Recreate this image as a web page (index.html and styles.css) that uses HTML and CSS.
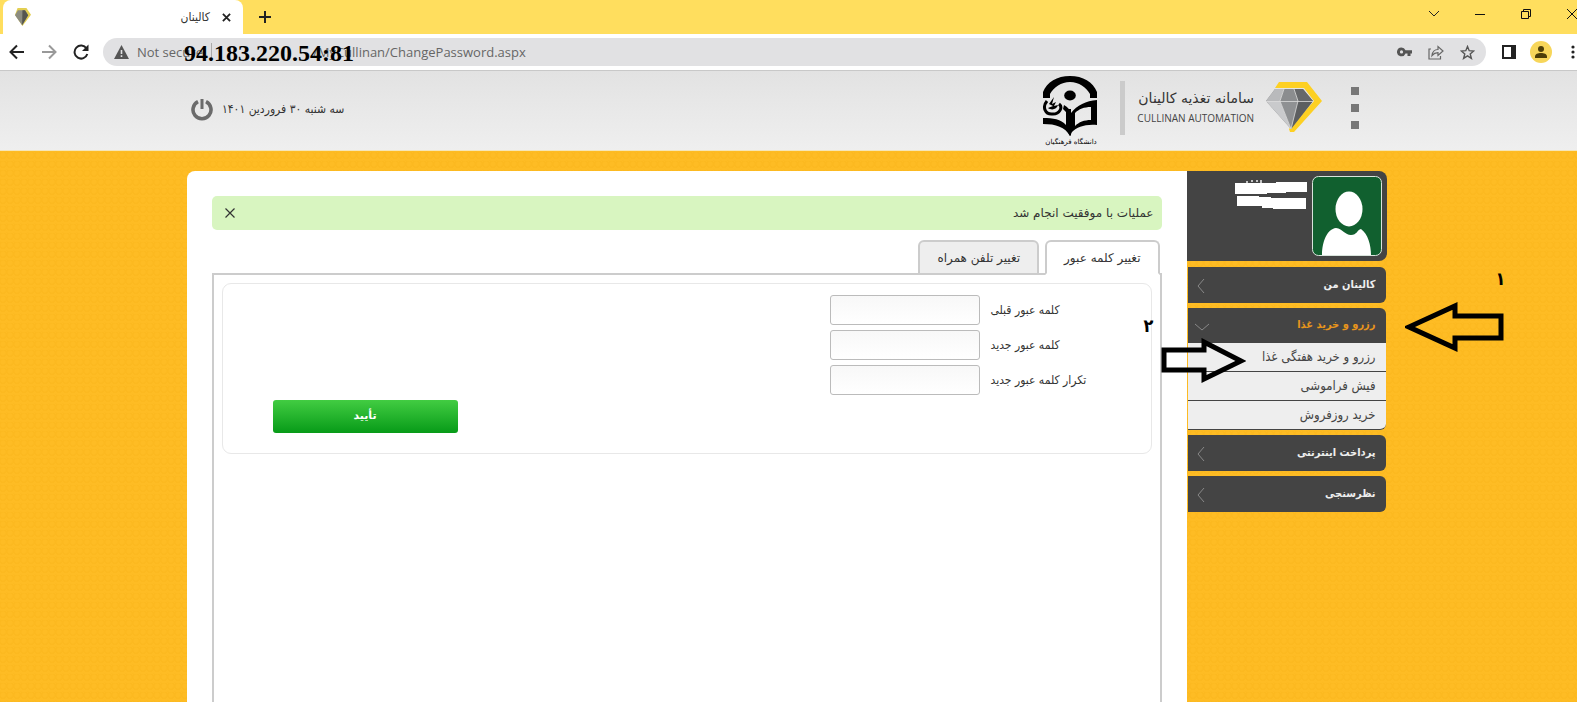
FILE: index.html
```html
<!DOCTYPE html>
<html lang="fa">
<head>
    <meta charset="UTF-8">
    <title>کالینان</title>
    <link rel="stylesheet" href="styles.css">
</head>
<body>
    <div class="tab-strip">
        <div class="browser-tab">
            <svg class="favicon" width="16" height="18" viewBox="0 0 56 50" preserveAspectRatio="none">
                <path d="M9 0h31l16 19-30 31L0 19z" fill="#e3cf52"/>
                <path d="M10 6h25l11 14-21 28L0 20z" fill="#8c8c80"/>
                <path d="M26 6h9l11 14-21 28z" fill="#55554f"/>
            </svg>
            <span class="browser-tab-title" dir="rtl">کالینان</span>
            <button class="icon-btn" aria-label="Close tab"><svg width="9" height="9" viewBox="0 0 10 10"><path d="M1 1l8 8M9 1L1 9" stroke="#222" stroke-width="2"/></svg></button>
        </div>
        <button class="icon-btn new-tab" aria-label="New tab"><svg width="12" height="12" viewBox="0 0 12 12"><path d="M6 0v12M0 6h12" stroke="#222" stroke-width="2"/></svg></button>
        <div class="window-buttons">
            <button class="icon-btn" aria-label="Search tabs"><svg width="12" height="12" viewBox="0 0 12 12"><path d="M1 3l5 5 5-5" fill="none" stroke="#222"/></svg></button>
            <button class="icon-btn" aria-label="Minimize"><svg width="12" height="12" viewBox="0 0 12 12"><path d="M1 6.500h10" stroke="#111"/></svg></button>
            <button class="icon-btn" aria-label="Restore"><svg width="12" height="12" viewBox="0 0 12 12"><path d="M1.500 3.500h7v7h-7zM3.500 3.500v-2h7v7h-2" fill="none" stroke="#111"/></svg></button>
            <button class="icon-btn" aria-label="Close"><svg width="12" height="12" viewBox="0 0 12 12"><path d="M1 1l10 10M11 1L1 11" stroke="#111"/></svg></button>
        </div>
    </div>

    <div class="toolbar">
        <button class="icon-btn" aria-label="Back"><svg width="16" height="16" viewBox="0 0 16 16"><path d="M15 8H2M8 1.500L1.500 8 8 14.500" fill="none" stroke="#222" stroke-width="2"/></svg></button>
        <button class="icon-btn" aria-label="Forward"><svg width="16" height="16" viewBox="0 0 16 16"><path d="M1 8h13M8 1.500L14.500 8 8 14.500" fill="none" stroke="#999" stroke-width="2"/></svg></button>
        <button class="icon-btn" aria-label="Reload"><svg width="16" height="16" viewBox="0 0 16 16"><path d="M13.500 4.500A6.500 6.500 0 1 0 14.300 10" fill="none" stroke="#222" stroke-width="2"/><path d="M15.500 .5v6.500H9z" fill="#222"/></svg></button>
        <div class="address-bar">
            <svg width="15" height="14" viewBox="0 0 15 14"><path d="M7.500 0L15 14H0z" fill="#555"/><path d="M7.500 5v4M7.500 10.300v1.700" stroke="#e1e1e3" stroke-width="1.600"/></svg>
            <span class="security">Not secure</span>
            <span class="host"><strong>94.183.220.54:81</strong></span>
            <input class="url" type="text" aria-label="Address" value="/MyCullinan/ChangePassword.aspx">
            <button class="icon-btn" aria-label="Passwords"><svg width="15" height="10" viewBox="0 0 15 10"><path fill-rule="evenodd" d="M4.500 .5a4.400 4.400 0 1 0 4 6H10.500V9h3V6.500H15V3.200H8.500A4.400 4.400 0 0 0 4.500 .5zm0 2.800a1.600 1.600 0 1 1 0 3.200 1.600 1.600 0 0 1 0-3.200z" fill="#555"/></svg></button>
            <button class="icon-btn" aria-label="Share"><svg width="16" height="15" viewBox="0 0 16 15"><path d="M3 4H1v10h11.500v-3M4 10.500c.5-4 2.500-6 6-6V1.500l5 4.500-5 4.500V7.700c-3 0-4.500 1-6 2.800z" fill="none" stroke="#666" stroke-width="1.200"/></svg></button>
            <button class="icon-btn" aria-label="Bookmark"><svg width="15" height="15" viewBox="0 0 15 15"><path d="M7.500 1.500l1.700 4.200 4.500.3-3.500 2.900 1.200 4.500-3.900-2.500-3.900 2.500 1.200-4.500L1.300 6l4.500-.3z" fill="none" stroke="#555" stroke-width="1.400"/></svg></button>
        </div>
        <div class="toolbar-end">
            <button class="icon-btn" aria-label="Side panel"><svg width="14" height="14" viewBox="0 0 14 14"><path d="M1 1h12v12H1z" fill="none" stroke="#222" stroke-width="2"/><path d="M9 0h5v14H9z" fill="#222"/></svg></button>
            <button class="icon-btn" aria-label="Profile"><svg width="22" height="22" viewBox="0 0 22 22"><circle cx="11" cy="11" r="11" fill="#f7d65a"/><circle cx="11" cy="8" r="3" fill="#4d3e08"/><path d="M5 17v-1.500c0-2.500 3-3.500 6-3.500s6 1 6 3.500V17z" fill="#4d3e08"/></svg></button>
            <button class="icon-btn menu-btn" aria-label="Menu"><svg width="4" height="14" viewBox="0 0 4 14"><g fill="#222"><circle cx="2" cy="2" r="1.600"/><circle cx="2" cy="7" r="1.600"/><circle cx="2" cy="12" r="1.600"/></g></svg></button>
        </div>
    </div>

    <div class="page" dir="rtl">
        <header class="header">
            <div class="header-inner">
                <button class="icon-btn dots" aria-label="منو"><i></i><i></i><i></i></button>
                <svg class="diamond" width="56" height="50" viewBox="0 0 56 50">
                    <path d="M13 0h28l15 19-28 31h-4l-1-3 25-28L38 6H9z" fill="#fdd023"/>
                    <path d="M9 7h28l10 12-22 28L0 19z" fill="#858585"/>
                    <path d="M9 7h9l-4 12H0z" fill="#b9babc"/>
                    <path d="M18 7h10l4 12H14z" fill="#8b8d8f"/>
                    <path d="M28 7h9l10 12H32z" fill="#66686a"/>
                    <path d="M0 19h14l11 28z" fill="#c9cacc"/>
                    <path d="M14 19h18l-7 28z" fill="#8f9193"/>
                    <path d="M32 19h15L25 47z" fill="#5c5e60"/>
                    <path d="M0 19.500h47M18 7l-4 12 11 28 7-28-4-12" fill="none" stroke="#dcdcdc" stroke-width=".8"/>
                </svg>
                <div class="brand">
                    <h1>سامانه تغذیه کالینان</h1>
                    <span dir="ltr">CULLINAN AUTOMATION</span>
                </div>
                <div class="divider"></div>
                <svg class="university" width="56" height="71" viewBox="0 0 56 71" role="img" aria-label="دانشگاه فرهنگیان">
                    <path d="M0 22V16C4 6 14 0 27 0s23 6 27 16v6h-7v-4C43 11 36 6 27 6S11 11 7 18v4z"/>
                    <ellipse cx="27" cy="19.500" rx="5.800" ry="5"/>
                    <path fill-rule="evenodd" d="M54 24v25c-12-1-20 2-25 7l-2 4-2-4V33h3v4c6-8 15-12 26-13zM32 37v13c4-4 9-6 16-6V31c-7 0-12 2-16 6z"/>
                    <path d="M0 42c10 0 18 1 23 7V36l-3-3 1-4c4 2 6 5 7 8v22l-1 1C22 51 13 48 0 48z"/>
                    <path d="M4 25c-5 6-2 14 6 13 7 0 10-7 6-10" fill="none" stroke="#000" stroke-width="3"/>
                    <path d="M5 32c4 3 9 1 10-3l-4 1 2-4-4 2 2-7-5 7 4 2z"/>
                    <text x="28" y="68" text-anchor="middle">دانشگاه فرهنگیان</text>
                </svg>
                <span class="date">سه شنبه ۳۰ فروردین ۱۴۰۱</span>
                <button class="icon-btn power" aria-label="خروج"><svg width="22" height="22" viewBox="0 0 22 22"><path d="M7 2.700a9 9 0 1 0 8 0" fill="none" stroke="#6b6b6b" stroke-width="3.600"/><path d="M11 0v10" stroke="#6b6b6b" stroke-width="3"/></svg></button>
            </div>
        </header>

        <div class="container">
            <aside class="sidebar">
                <div class="user-box">
                    <svg class="avatar" width="70" height="80" viewBox="0 0 70 80">
                        <rect x=".5" y=".5" width="69" height="79" rx="6" fill="#11602f" stroke="#d9e4dc"/>
                        <ellipse cx="37" cy="33" rx="13.500" ry="17.500" fill="#fff"/>
                        <path d="M10 79c0-13 5-26 14-27 7 1 9 7 15 7s6-5 10-6c7 5 10 16 10 26z" fill="#fff"/>
                    </svg>
                    <svg class="user-name" width="72" height="30" viewBox="0 0 72 30">
                        <path d="M12 1v2M17 0v2M22 0v2M26 0v3" stroke="#eee" stroke-width="1.500"/>
                        <path d="M0 3h41V2h31v10H51v1H32v1H0zM2 16h22v1h12v1h35v11H38v-1H27v-2H2z" fill="#fff"/>
                    </svg>
                </div>
                <nav class="menu">
                    <a class="menu-item" href="#">کالینان من<svg width="8" height="14" viewBox="0 0 8 14"><path d="M7 0L1 7l6 7" fill="none" stroke="#888"/></svg></a>
                    <div class="menu-group">
                        <a class="menu-item open" href="#">رزرو و خرید غذا<svg width="14" height="8" viewBox="0 0 14 8"><path d="M0 1l7 6 7-6" fill="none" stroke="#888"/></svg></a>
                        <a class="sub-item" href="#">رزرو و خرید هفتگی غذا</a>
                        <a class="sub-item" href="#">فیش فراموشی</a>
                        <a class="sub-item" href="#">خرید روزفروش</a>
                    </div>
                    <a class="menu-item" href="#">پرداخت اینترنتی<svg width="8" height="14" viewBox="0 0 8 14"><path d="M7 0L1 7l6 7" fill="none" stroke="#888"/></svg></a>
                    <a class="menu-item" href="#">نظرسنجی<svg width="8" height="14" viewBox="0 0 8 14"><path d="M7 0L1 7l6 7" fill="none" stroke="#888"/></svg></a>
                </nav>
            </aside>

            <main class="content">
                <div class="alert">
                    <span>عملیات با موفقیت انجام شد</span>
                    <button class="icon-btn" aria-label="بستن"><svg width="10" height="10" viewBox="0 0 10 10"><path d="M.5 .5l9 9M9.500 .5l-9 9" stroke="#333" stroke-width="1.200"/></svg></button>
                </div>
                <div class="tabs">
                    <button class="tab active">تغییر کلمه عبور</button>
                    <button class="tab">تغییر تلفن همراه</button>
                </div>
                <div class="panel">
                    <form class="password-form">
                        <div class="field">
                            <label for="old-password">کلمه عبور قبلی</label>
                            <input id="old-password" type="password">
                        </div>
                        <div class="field">
                            <label for="new-password">کلمه عبور جدید</label>
                            <input id="new-password" type="password">
                        </div>
                        <div class="field">
                            <label for="repeat-password">تکرار کلمه عبور جدید</label>
                            <input id="repeat-password" type="password">
                        </div>
                        <button class="submit" type="button">تأیید</button>
                    </form>
                </div>
            </main>

            <span class="step step-one">۱</span>
            <span class="step step-two">۲</span>
            <svg class="arrow arrow-left" width="100" height="50" viewBox="0 0 100 50"><path d="M4 25L50 4v10h46v22H50v10z"/></svg>
            <svg class="arrow arrow-right" width="85" height="46" viewBox="0 0 85 46"><path d="M80 23L43 4v8H3v20h40v9z"/></svg>
        </div>
    </div>
</body>
</html>
```

FILE: styles.css
```css
* {
    box-sizing: border-box;
}
body {
    margin: 0;
    min-height: 100vh;
    display: flex;
    flex-direction: column;
    overflow: hidden;
    font-family: "DejaVu Sans", sans-serif;
    font-size: 12px;
    color: #333;
}
button, input {
    font-family: inherit;
    font-size: inherit;
    color: inherit;
}
a {
    text-decoration: none;
}
.icon-btn {
    display: flex;
    flex: none;
    padding: 0;
    border: none;
    background: none;
    cursor: pointer;
}

/* browser */
.tab-strip {
    display: flex;
    align-items: center;
    height: 34px;
    padding-left: 3px;
    background: #ffde5e;
}
.browser-tab {
    display: flex;
    align-items: center;
    gap: 12px;
    width: 240px;
    height: 34px;
    padding: 0 12px;
    background: #fff;
    border-radius: 8px 8px 0 0;
}
.browser-tab-title {
    flex: 1;
    font-family: "DejaVu Sans Condensed", "DejaVu Sans", sans-serif;
}
.new-tab {
    margin-left: 16px;
}
.window-buttons {
    display: flex;
    gap: 34px;
    margin-left: auto;
    margin-right: -1px;
    padding-bottom: 6px;
}
.toolbar {
    display: flex;
    align-items: center;
    gap: 16px;
    height: 37px;
    padding: 0 2px 0 9px;
    background: #fff;
    border-bottom: 1px solid #c8c8c8;
    font-family: "Open Sans", sans-serif;
    font-size: 13px;
    color: #666;
}
.toolbar-end {
    display: flex;
    align-items: center;
    gap: 14px;
}
.menu-btn {
    margin-left: 5px;
}
.address-bar {
    display: flex;
    flex: 1;
    align-items: center;
    gap: 16px;
    height: 28px;
    margin-left: -2px;
    padding: 0 11px;
    background: #e1e1e3;
    border-radius: 14px;
}
.security {
    margin-left: -8px;
    margin-right: -8px;
}
.host {
    position: relative;
    width: 100px;
    height: 18px;
    border-left: 1px solid #aaa;
}
.host strong {
    position: absolute;
    left: -28px;
    top: -2px;
    font-family: "Liberation Serif", serif;
    font-size: 24px;
    line-height: 24px;
    color: #000;
}
.url {
    flex: 1;
    margin-left: -14px;
    padding: 0;
    border: none;
    background: none;
}

/* page */
.page {
    display: flex;
    flex: 1;
    flex-direction: column;
    background: #febc24 repeating-radial-gradient(circle at 3px 3px, #febc24 0 2px, #fcb920 3px 4px) 0 0 / 7px 9px;
}
.header {
    padding: 0 3px 0 0;
    background: linear-gradient(#e2e2e2, #efefef);
    border-bottom: 1px solid #f5e6b8;
}
.header-inner {
    display: flex;
    align-items: center;
    max-width: 1200px;
    height: 79px;
    margin: 0 auto;
    padding: 0 28px 0 4px;
}
.dots {
    flex-direction: column;
    gap: 9px;
    margin-left: 29px;
    padding-bottom: 6px;
}
.dots i {
    width: 8px;
    height: 8px;
    background: #777;
}
.diamond {
    margin-left: 12px;
    margin-bottom: 8px;
}
.brand {
    display: flex;
    flex-direction: column;
    align-items: flex-start;
    gap: 2px;
    margin-bottom: 8px;
}
.brand h1 {
    margin: 0;
    font-size: 14px;
    line-height: 20px;
    font-weight: normal;
}
.brand span {
    font-family: "Open Sans", sans-serif;
    font-size: 10px;
    line-height: 16px;
    color: #444;
}
.divider {
    width: 5px;
    height: 54px;
    margin: 0 12px 6px 21px;
    background: #cbcbcb;
}
.university {
    margin-top: 2px;
}
.university text {
    font-family: "DejaVu Sans", sans-serif;
    font-size: 7px;
}
.date {
    margin-right: auto;
    margin-left: 9px;
    margin-bottom: 4px;
    font-family: "DejaVu Sans Condensed", "DejaVu Sans", sans-serif;
}
.power {
    margin-bottom: 2px;
}

.container {
    position: relative;
    display: flex;
    flex: 1;
    width: 1200px;
    max-width: calc(100% - 3px);
    margin: 0 auto;
    padding-top: 20px;
    right: 2px;
}
.sidebar {
    width: 200px;
}
.user-box {
    display: flex;
    align-items: flex-start;
    gap: 5px;
    height: 90px;
    padding: 5px;
    background: #444;
    border-radius: 0 8px 8px 0;
}
.user-name {
    margin-top: 4px;
}
.menu {
    display: flex;
    flex-direction: column;
    gap: 5px;
    margin-top: 6px;
    padding: 0 1px;
}
.menu-item {
    display: flex;
    align-items: center;
    justify-content: space-between;
    height: 36px;
    padding: 0 10px 2px 9px;
    background: #444;
    border-radius: 0 6px 6px 0;
    color: #eee;
    font-family: "DejaVu Sans Condensed", "DejaVu Sans", sans-serif;
    font-size: 11px;
    font-weight: bold;
}
.menu-item.open {
    height: 35px;
    padding-left: 7px;
    border-radius: 0 6px 0 0;
    color: #e8951c;
}
.menu-item svg {
    margin-top: 4px;
}
.sub-item {
    display: flex;
    align-items: center;
    height: 29px;
    padding: 0 10px 2px;
    background: #eee;
    border-bottom: 1px solid #444;
    color: #444;
    font-family: "DejaVu Sans Condensed", "DejaVu Sans", sans-serif;
    font-size: 13px;
}
.sub-item:last-child {
    border-radius: 0 0 6px 0;
}

.content {
    display: flex;
    flex: 1;
    flex-direction: column;
    padding: 25px 25px 0;
    background: #fff;
    border-top-left-radius: 8px;
}
.alert {
    display: flex;
    align-items: center;
    justify-content: space-between;
    height: 34px;
    padding: 0 8px 0 13px;
    background: #d8f5c0;
    border-radius: 5px;
}
.tabs {
    display: flex;
    gap: 6px;
    margin: 10px 2px -2px;
}
.tab {
    height: 35px;
    padding: 0 17px;
    background: #eee;
    border: 2px solid #ccc;
    border-radius: 6px 6px 0 0;
}
.tab.active {
    background: #fff;
    border-bottom-color: #fff;
    z-index: 1;
}
.panel {
    flex: 1;
    padding: 8px;
    border: 2px solid #ccc;
    border-bottom: none;
}
.password-form {
    display: flex;
    flex-direction: column;
    gap: 5px;
    padding: 11px 61px 20px 50px;
    border: 1px solid #e8e8e8;
    border-radius: 9px;
}
.field {
    display: flex;
    align-items: center;
    gap: 11px;
}
.field label {
    width: 99px;
    font-family: "DejaVu Sans Condensed", "DejaVu Sans", sans-serif;
    text-align: left;
    white-space: nowrap;
}
.field input {
    width: 150px;
    height: 30px;
    background: linear-gradient(#f8f8f8, #fff);
    border: 1px solid #bbb;
    border-radius: 3px;
}
.submit {
    align-self: flex-end;
    width: 185px;
    height: 33px;
    padding-bottom: 4px;
    background: linear-gradient(#42cc42, #079b18);
    border: none;
    border-radius: 3px;
    color: #fff;
    font-size: 11px;
    font-weight: bold;
}

/* guide marks over the page */
.step {
    position: absolute;
    font-family: "DejaVu Sans Condensed", "DejaVu Sans", sans-serif;
    font-size: 18px;
    line-height: 20px;
    font-weight: bold;
    color: #000;
}
.step-one {
    right: -119px;
    top: 118px;
}
.step-two {
    right: 233px;
    top: 165px;
}
.arrow {
    position: absolute;
    fill: none;
    stroke: #000;
    stroke-width: 5px;
}
.arrow-left {
    right: -118px;
    top: 151px;
}
.arrow-right {
    right: 141px;
    top: 187px;
}
```
